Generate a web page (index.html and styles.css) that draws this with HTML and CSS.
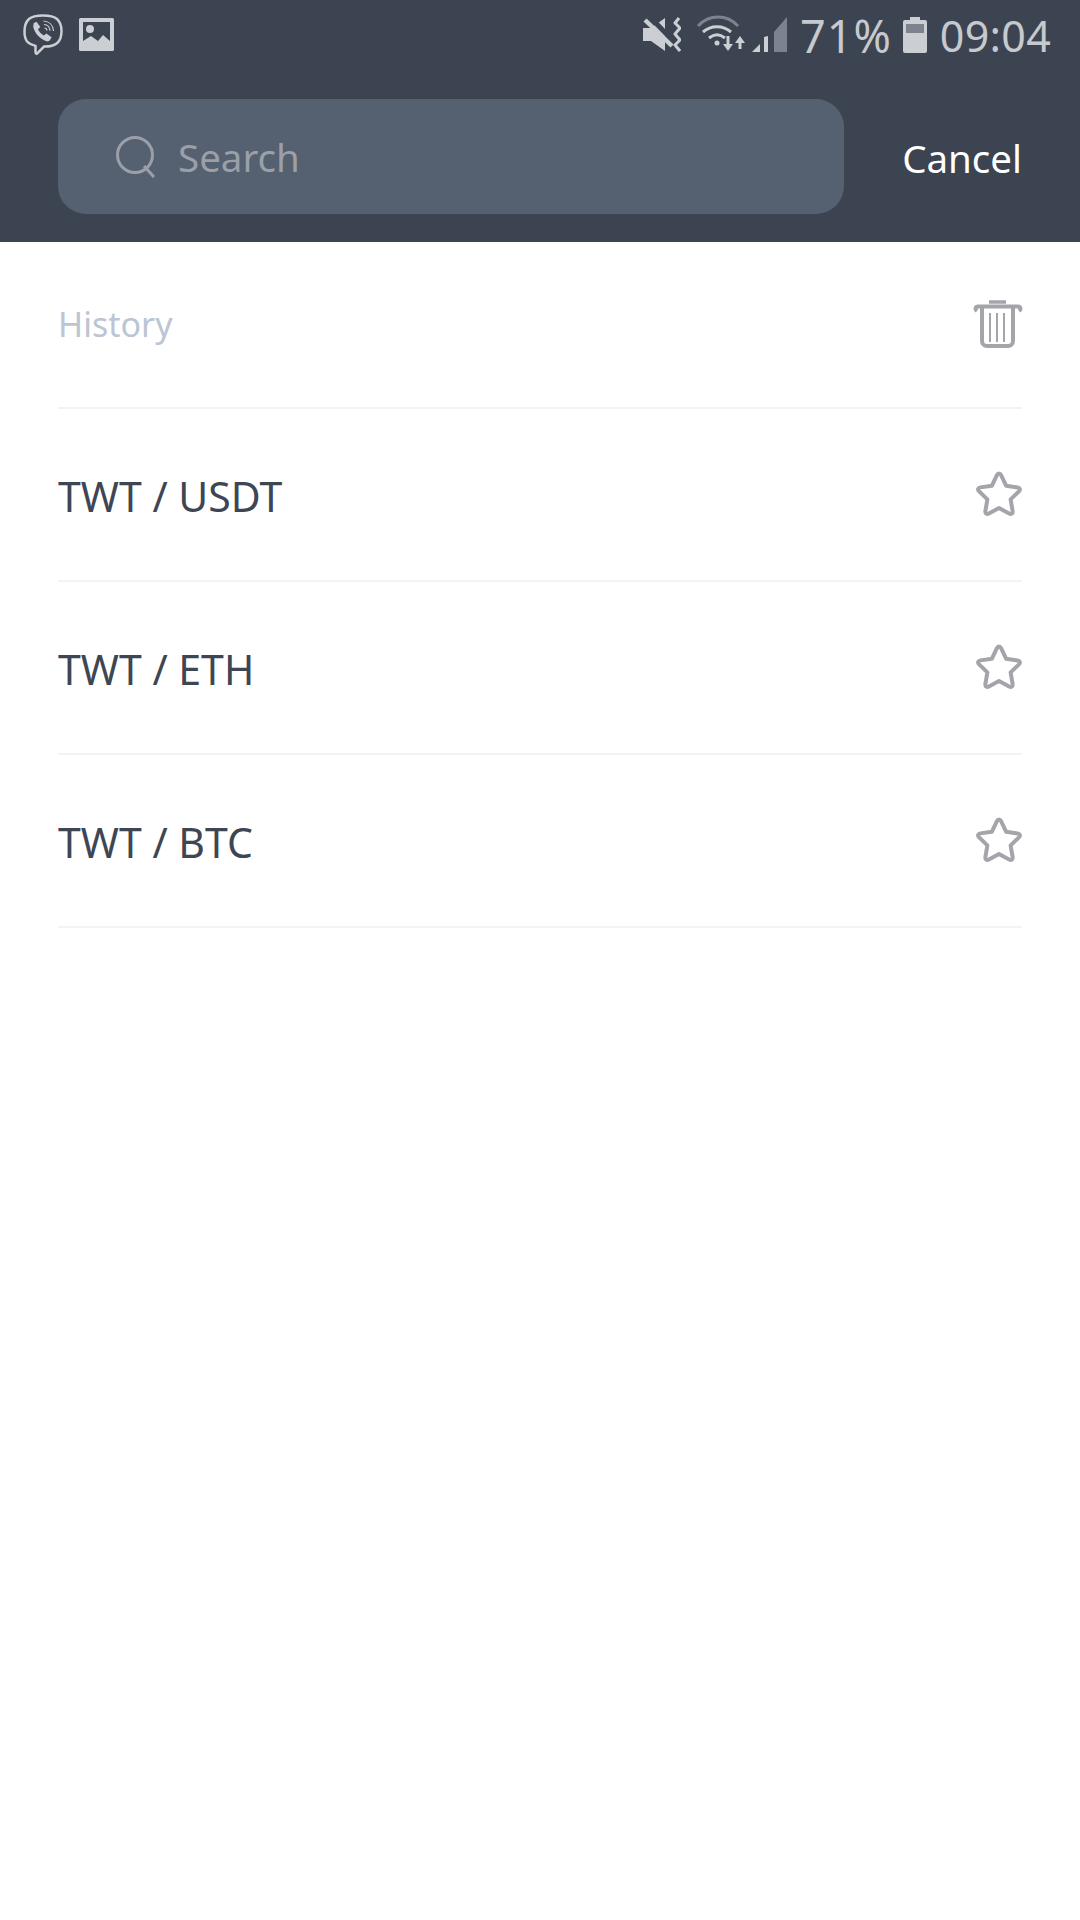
FILE: index.html
```html
<!DOCTYPE html>
<html lang="en">
<head>
<meta charset="utf-8">
<title>Search</title>
<link rel="stylesheet" href="styles.css">
</head>
<body>
<header class="header">
  <div class="status">
    <div class="status-left">
      <svg class="ico-viber" viewBox="0 0 40 42"><path class="st-v" d="M20 1.500c6.500 0 11 .8 14 3.500 3.300 3 4.500 7 4.500 12s-1.200 9.500-4.500 12.300c-3 2.500-8 3.400-13 3.300l-6.500 6.500c-1 1-2 .5-2-1v-6.200c-3-.7-5.800-1.800-7.800-3.800C1.900 25.500 1.500 22 1.500 17.500c0-5 1.200-9.500 4.500-12.500C9 2.300 13.500 1.500 20 1.500z"/><path class="fl" d="M10 9.500l3.500-1.800 3.800 5.300-2.300 2.300c1 2.500 3.200 5 6 6.200l2.300-2 5.300 3.800-1.700 3c-1 1.200-2.500 1.400-4 .8-6-2.500-10.700-7-12.500-13.500-.4-1.700 0-3 .6-4.100z"/><path class="thin" d="M20.500 7c5.500.3 9.500 4 10 10M21 10.500c3.500.2 5.800 2.800 6 6.300M21.500 14c1.500.1 2.300 1 2.500 2.500"/></svg>
      <svg class="ico-img" viewBox="0 0 35 33"><path class="fl" fill-rule="evenodd" d="M1.500 0h32A1.500 1.500 0 0 1 35 1.500v30a1.500 1.500 0 0 1-1.500 1.500h-32A1.500 1.500 0 0 1 0 31.500v-30A1.500 1.500 0 0 1 1.500 0zM4 4v19l8-5 7 5 5-6 7 6V4zM11 7a4 4 0 1 1 0 8 4 4 0 0 1 0-8z"/></svg>
    </div>
    <div class="status-right">
      <svg class="ico-mute" viewBox="0 0 38 36"><path class="fl" d="M0 11h8L22 1v33L8 24H0z"/><path class="mute-slash" d="M6 -1l30 31"/><path class="mute-bar" d="M2 3l27 26"/><path class="wave" d="M36 1l-4 5 5 5-5 6 5 6-5 5 5 6"/></svg>
      <svg class="ico-wifi" viewBox="0 0 50 38"><path class="dim" d="M1 11C12 -1 30 -1 41 11"/><path class="st" d="M6 17c8-7 20-7 28 0M12 23c5-4 11-4 16 0"/><circle class="fl" cx="20" cy="28" r="2.500"/><path class="fl" d="M29.500 21h3v8H36l-5 7-5-7h3.500zM43 21l5 7h-3.500v6h-3v-6H38z"/></svg>
      <svg class="ico-signal" viewBox="0 0 36 36"><path class="fl" d="M1 36l8-8v8zM13 21l4-1v16h-4z"/><path class="dim-fill" d="M23 16L36 1v35H23z"/></svg>
      <span class="status-text pct">71%</span>
      <svg class="ico-batt" viewBox="0 0 24 36"><path class="fl" fill-rule="evenodd" d="M7 0h10v3h5a2 2 0 0 1 2 2v29a2 2 0 0 1-2 2H2a2 2 0 0 1-2-2V5a2 2 0 0 1 2-2h5z"/><rect class="batt-in" x="3" y="7" width="18" height="9"/></svg>
      <span class="status-text time">09:04</span>
    </div>
  </div>
  <div class="search-row">
    <div class="search-box">
      <svg class="ico-search" viewBox="0 0 40 42"><circle cx="19" cy="19" r="17.500" class="srch"/><path class="srch" d="M28 30l10 11"/></svg>
      <span class="search-text">Search</span>
    </div>
    <span class="cancel">Cancel</span>
  </div>
</header>
<main class="list">
  <div class="row row-history">
    <span class="history">History</span>
    <svg class="ico-trash" viewBox="0 0 50 48"><path class="tr2" d="M16 2h17"/><path class="tr" d="M4 11c-2.500-2-1.500-4.500 1-4.500h40c2.500 0 3.500 2.500 1 4.500"/><path class="tr" d="M9 8v33a5 5 0 0 0 5 5h21a5 5 0 0 0 5-5V8"/><path class="tr1" d="M17 13v29M24 13v29M31 13v29"/></svg>
  </div>
  <div class="row">
    <span class="pair">TWT / USDT</span>
    <svg class="ico-star" viewBox="0 0 48 46"><path class="tr" d="M24 2.500c1 0 1.600.6 2.200 1.800l5 10.500 11.400 1.600c2.500.4 3 2.300 1.300 4l-8.300 8 2 11.500c.4 2.600-1.400 3.700-3.500 2.600L24 37l-10.100 5.500c-2.100 1.100-3.900 0-3.500-2.600l2-11.500-8.300-8c-1.700-1.700-1.200-3.600 1.300-4l11.400-1.600 5-10.500c.6-1.200 1.200-1.800 2.200-1.800z"/></svg>
  </div>
  <div class="row">
    <span class="pair">TWT / ETH</span>
    <svg class="ico-star" viewBox="0 0 48 46"><path class="tr" d="M24 2.500c1 0 1.600.6 2.200 1.800l5 10.500 11.400 1.600c2.500.4 3 2.300 1.300 4l-8.300 8 2 11.500c.4 2.600-1.400 3.700-3.500 2.600L24 37l-10.100 5.500c-2.100 1.100-3.900 0-3.500-2.600l2-11.500-8.300-8c-1.700-1.700-1.200-3.600 1.300-4l11.400-1.600 5-10.500c.6-1.200 1.200-1.800 2.200-1.800z"/></svg>
  </div>
  <div class="row">
    <span class="pair">TWT / BTC</span>
    <svg class="ico-star" viewBox="0 0 48 46"><path class="tr" d="M24 2.500c1 0 1.600.6 2.200 1.800l5 10.500 11.400 1.600c2.500.4 3 2.300 1.300 4l-8.300 8 2 11.500c.4 2.600-1.400 3.700-3.500 2.600L24 37l-10.100 5.500c-2.100 1.100-3.900 0-3.500-2.600l2-11.500-8.300-8c-1.700-1.700-1.200-3.600 1.300-4l11.400-1.600 5-10.500c.6-1.200 1.200-1.800 2.200-1.800z"/></svg>
  </div>
</main>
</body>
</html>
```
FILE: styles.css
```css
* { box-sizing: border-box; }
html, body { margin: 0; padding: 0; }
body {
  width: 1080px;
  height: 1920px;
  background: #fff;
  font-family: "Noto Sans", sans-serif;
  overflow: hidden;
}
svg { display: block; flex: none; }
.header { height: 242px; background: #3d4451; display: flex; flex-direction: column; }
.status { height: 99px; display: flex; justify-content: space-between; padding: 14px 29px 0 23px; }
.status-left { display: flex; align-items: flex-start; gap: 16px; height: 42px; }
.ico-viber { width: 40px; height: 42px; }
.ico-img { width: 35px; height: 33px; margin-top: 4px; }
.status-right { display: flex; align-items: flex-start; height: 40px; }
.status-text { font-family: "Noto Sans", sans-serif; font-weight: 400; font-size: 43px; line-height: 44px; color: #c6c9ce; }
.ico-mute { width: 38px; height: 36px; margin-top: 3px; }
.ico-wifi { width: 50px; height: 38px; margin: 1px 0 0 16px; }
.ico-signal { width: 36px; height: 36px; margin: 2px 0 0 4px; }
.pct { margin-left: 13px; font-size: 45px; letter-spacing: 1px; }
.ico-batt { width: 24px; height: 36px; margin: 3px 0 0 11px; }
.time { margin-left: 13px; letter-spacing: 0.250px; }
.fl { fill: #cbced2; }
.st { fill: none; stroke: #cbced2; stroke-width: 3; }
.st-v { fill: none; stroke: #cbced2; stroke-width: 2.500; }
.thin { fill: none; stroke: #cbced2; stroke-width: 1.200; }
.dim { fill: none; stroke: #7c838e; stroke-width: 3; }
.dim-fill { fill: #7c838e; }
.batt-in { fill: #7c838e; }
.mute-slash { fill: none; stroke: #3d4451; stroke-width: 5; }
.mute-bar { fill: none; stroke: #cbced2; stroke-width: 4.500; }
.wave { fill: none; stroke: #cbced2; stroke-width: 3; stroke-linejoin: round; }
.search-row { display: flex; align-items: center; justify-content: space-between; padding: 0 58px; height: 115px; }
.search-box { width: 786px; height: 115px; border-radius: 28px; background: #556070; display: flex; align-items: center; padding-left: 58px; }
.ico-search { width: 40px; height: 42px; }
.srch { fill: none; stroke: #9a9fa8; stroke-width: 3; }
.search-text { margin-left: 22px; font-size: 38.500px; line-height: 44px; color: #9a9fa8; }
.cancel { font-size: 38.500px; line-height: 44px; padding-top: 2px; color: #fff; }
.list { padding: 0 58px; display: flex; flex-direction: column; }
.row { height: 173px; display: flex; align-items: center; justify-content: space-between; border-bottom: 2px solid #f0f4f6; }
.row-history { height: 167px; }
.history { font-size: 34px; line-height: 46px; margin-top: -2px; color: #bcc5d3; }
.pair { font-size: 41px; line-height: 56px; padding-top: 2px; color: #3e4553; }
.tr { fill: none; stroke: #a3a5ab; stroke-width: 4; stroke-linejoin: round; }
.tr1 { fill: none; stroke: #a3a5ab; stroke-width: 2; }
.tr2 { fill: none; stroke: #a3a5ab; stroke-width: 3.500; }
.ico-trash { width: 50px; height: 48px; margin: -2px -1px 0 0; }
.ico-star { width: 48px; height: 46px; margin: -1px -1px 0 0; }
```
